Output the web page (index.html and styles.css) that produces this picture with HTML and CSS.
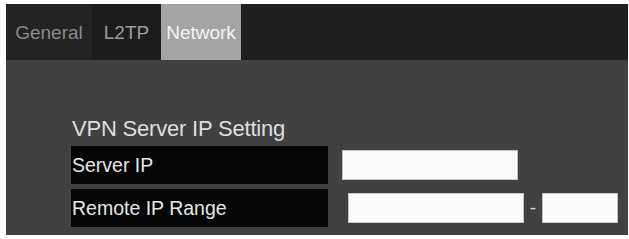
FILE: index.html
```html
<!DOCTYPE html>
<html>
    <head>
        <meta name="viewport" content="width=device-width, initial-scale=1.0">
        <title>VPN Network</title>
        <link rel="stylesheet" href="styles.css">
    </head>
    <body>
        <div class="panel">
            <div class="tabs">
                <div class="tab general">General</div>
                <div class="tab l2tp">L2TP</div>
                <div class="tab active">Network</div>
            </div>
            <div class="content">
                <div class="heading">VPN Server IP Setting</div>
                <div class="row">
                    <div class="label">Server IP</div>
                    <input type="text" class="ip first">
                </div>
                <div class="row">
                    <div class="label">Remote IP Range</div>
                    <input type="text" class="ip second">
                    <span class="dash">-</span>
                    <input type="text" class="ip short">
                </div>
            </div>
        </div>
    </body>
</html>
```

FILE: styles.css
```css
body{
    margin: 0px;
    background-color: white;
    font-family: "Liberation Sans", Arial, sans-serif;
}
.panel{
    margin: 4px 1px 0px 6px;
    height: 231px;
    background-color: #414141;
}
.tabs{
    display: flex;
    height: 56px;
    background-color: #1f1f1f;
}
.tab{
    display: flex;
    align-items: center;
    justify-content: center;
    padding-top: 2px;
    box-sizing: border-box;
    font-size: 19px;
}
.general{
    width: 86px;
    background-color: #232323;
    color: #8a8a8a;
}
.l2tp{
    width: 69px;
    background-color: #1c1c1c;
    color: #9c9c9c;
}
.active{
    width: 80px;
    background-color: #a4a4a4;
    color: #f4f4f4;
}
.content{
    padding: 56px 0px 0px 65px;
}
.heading{
    margin: 0px 0px 5px 1px;
    font-size: 22px;
    line-height: 25px;
    color: #dedede;
    letter-spacing: -0.2px;
}
.row{
    display: flex;
    align-items: center;
    height: 38px;
    margin-bottom: 5px;
}
.label{
    display: flex;
    align-items: center;
    width: 257px;
    height: 100%;
    box-sizing: border-box;
    padding-left: 1px;
    background-color: #050505;
    color: #e6e6e6;
    font-size: 19.5px;
}
.ip{
    box-sizing: border-box;
    width: 176px;
    height: 30px;
    border: 1px solid #c4c4c4;
    background-color: #fbfbfb;
    padding: 0px;
}
.first{
    margin-left: 14px;
}
.second{
    margin-left: 20px;
}
.dash{
    width: 18px;
    text-align: center;
    color: #d8d8d8;
    font-size: 19px;
}
.short{
    width: 76px;
}
```
